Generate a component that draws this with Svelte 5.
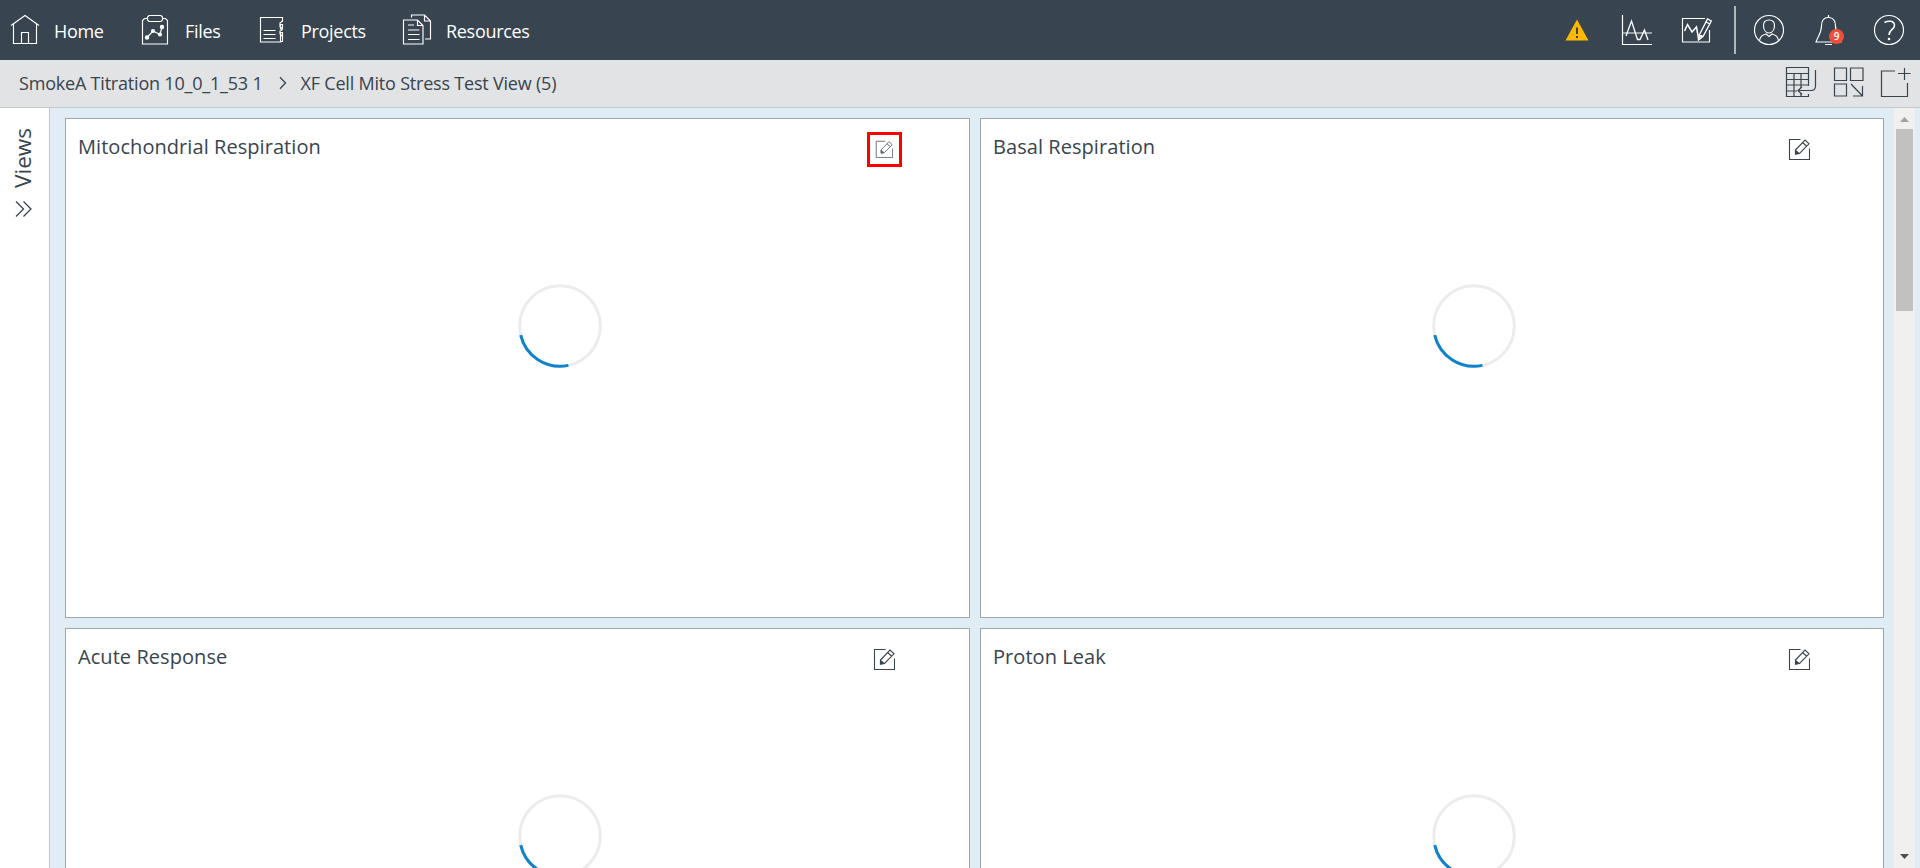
<script>
  const nav = [
    { id: 'home', label: 'Home' },
    { id: 'files', label: 'Files' },
    { id: 'projects', label: 'Projects' },
    { id: 'resources', label: 'Resources' }
  ];
  const cards = [
    { title: 'Mitochondrial Respiration', marked: true },
    { title: 'Basal Respiration' },
    { title: 'Acute Response' },
    { title: 'Proton Leak' }
  ];
</script>

{#snippet navIcon(id)}
  <svg class="ico" width="32" height="32" viewBox="0 0 32 32">
    {#if id === 'home'}
      <path d="M1 11.5 15 1.5 29 11.5M3.5 10V29.5H26.500V10M11.500 29.500V18.500H18.500V29.500" />
    {:else if id === 'files'}
      <path d="M6.500 4.500H3.500L1.500 6.500V30H26.500V6.500L24.500 4.500H21.500M8 1.500H20L21.500 3V6L20 7.500H8L6.500 6V3ZM6 23.500 12 17 19 20.500 21 13" />
      <g fill="#fff" stroke="none"><circle cx="6" cy="23.500" r="2.200" /><circle cx="12" cy="17" r="2.100" /><circle cx="19" cy="20.500" r="2.100" /><circle cx="21" cy="13" r="2.200" /></g>
    {:else if id === 'projects'}
      <path d="M26.500 8V3.500H4.500V28H24.500V22M7.500 16.500H19.500M7.500 20.500H19.500M7.500 24.500H19.500M26.500 3.500V7L24 9V13L26 14V16L24 17V20L26.500 22V27.500H24M24.500 10.500H26.500V15H24.500ZM24.500 18.500H26.500V22H24.500Z" />
    {:else}
      <path d="M9.500 3V.500H22.500L28.500 6.500V24.500H23M22.500 .500V6.500H28.500M1.500 5.500H15.500L21 11V29.500H1.500ZM15.500 5.500V11H21M6 10.500H12M6 15.500H17.500M6 20H17.500M6 25H17.500" transform="translate(0 .5)" />
    {/if}
  </svg>
{/snippet}

{#snippet editIcon(size)}
  <svg class="edit" width={size} height={size} viewBox="0 0 22 22">
    <path d="M12.500 1.500H1.500V21.500H21.500V10.500" />
    <path d="M7.500 12 17 2 21 5.800 11.500 15.500 7.500 16ZM14.500 4.500 18.500 8" />
    <path d="M7.500 12.500 11 15.500 7.500 16Z" fill="#38444f" />
  </svg>
{/snippet}

<div class="app">
  <header>
    <nav>
      {#each nav as item}
        <a class={item.id} href="#{item.id}">
          {@render navIcon(item.id)}
          <span>{item.label}</span>
        </a>
      {/each}
    </nav>
    <div class="tools">
      <svg class="warn" width="24" height="22" viewBox="0 0 24 22">
        <path d="M12 .500 23.500 21.500H.500Z" fill="#ffb800" />
        <path d="M12 8.500V15M12 17V19" stroke="#38444f" stroke-width="2" />
      </svg>
      <svg class="ico curve" width="32" height="32" viewBox="0 0 32 32">
        <path d="M1.500 1V30.500H31" stroke-width="1.200" />
        <path d="M2 19H31" stroke="#aeb5bb" stroke-width="1.600" />
        <path d="M5 22 10.500 7 16.500 25.500H19L23.500 16 27 26" stroke-width="1.300" />
      </svg>
      <svg class="ico draw" width="32" height="32" viewBox="0 0 32 32">
        <g transform="translate(0 2)">
          <path d="M24 2.500H1.500V26H28.500V14" />
          <path d="M3.500 15 6.500 8.500 11 16 15.500 11 17.500 22.500 21 19.500" stroke-width="1.500" />
          <path d="M18 19.500 26.500 3 30.300 5 22 20.500 17.500 24ZM25 6 29 8M18 19.500 22 20.500" stroke-width="1.300" />
        </g>
      </svg>
      <i class="divider"></i>
      <svg class="ico user" width="32" height="32" viewBox="0 0 32 32">
        <circle cx="16" cy="16" r="14.500" />
        <path d="M16 6C12 6 10.300 8.500 10.500 12 10.700 16 13 19 16 19S21.300 16 21.500 12C21.700 8.500 20 6 16 6ZM6.500 26.500C7.500 22 9 21.500 13 20L16 22.500 19 20C23 21.500 24.500 22 25.500 26.500" />
      </svg>
      <div class="bell">
        <svg class="ico" width="28" height="32" viewBox="0 0 28 32">
          <path d="M12.500 3.500C8 4 6.500 7 6.500 12 6.500 19 3 22 1 28H26C24 22 20.500 19 20.500 12 20.500 7 18 4 14.500 3.500ZM13.500 1V4M10 30.500H17" />
        </svg>
        <b>9</b>
      </div>
      <svg class="ico help" width="32" height="32" viewBox="0 0 32 32">
        <circle cx="16" cy="16" r="14.500" />
        <path d="M11.500 8.500C15 6.300 21.500 6.500 21.500 11.500 21.500 15.500 16 15.500 16 21" stroke-width="1.500" />
        <circle cx="16" cy="25" r="1.300" fill="#fff" stroke="none" />
      </svg>
    </div>
  </header>

  <div class="crumbs">
    <span>SmokeA Titration 10_0_1_53 1</span>
    <svg class="sep" width="8" height="14" viewBox="0 0 8 14"><path d="M1 1.200 6.500 7 1 12.800" /></svg>
    <span>XF Cell Mito Stress Test View (5)</span>
    <div class="actions">
      <svg width="32" height="32" viewBox="0 0 32 32">
        <path d="M23.500 20V1.500H1.500V30.500H23.500V28M1.500 7.500H23.500M1.500 13.500H23.500M1.500 19H23.500M1.500 25H12M9 7.500V30.500M16 7.500V22M16 27V30.500" />
        <path d="M30.500 4V20C30.500 23 29 24.500 26 24.500H13M17 21 13 24.500 17 28.500" />
      </svg>
      <svg width="32" height="32" viewBox="0 0 32 32">
        <path d="M1.500 2H13.500V14.500H1.500ZM17.500 2H30V14.500H17.500ZM1.500 18H13.500V30H1.500ZM18 18 29.500 30M29.500 20V30H20" />
      </svg>
      <svg class="add" width="32" height="32" viewBox="0 0 32 32">
        <path d="M15 5H1.500V30.500H27.500V17M24.500 2V14M18 7.500H30.500" />
      </svg>
    </div>
  </div>

  <div class="body">
    <aside>
      <span>Views</span>
      <svg width="18" height="18" viewBox="0 0 18 18"><path d="M1 1.500 8.500 9 1 16.500M8.500 1.500 16 9 8.500 16.500" /></svg>
    </aside>
    <main>
      {#each cards as card}
        <section>
          <h2>{card.title}</h2>
          <button class:marked={card.marked} aria-label="Edit">
            {@render editIcon(card.marked ? 18 : 22)}
          </button>
          <svg class="spinner" width="84" height="84" viewBox="0 0 84 84">
            <circle cx="42" cy="42" r="40.300" stroke="#ebecee" />
            <path d="M50.400 81.400A40.300 40.300 0 0 1 2.700 51.100" stroke="#0e82cb" />
          </svg>
        </section>
      {/each}
    </main>
    <div class="scroll">
      <svg width="9" height="5" viewBox="0 0 9 5"><path d="M0 5 4.500 0 9 5Z" fill="#a0a0a0" /></svg>
      <i></i>
      <svg class="down" width="9" height="5" viewBox="0 0 9 5"><path d="M0 0H9L4.500 5Z" fill="#4f4f4f" /></svg>
    </div>
  </div>
</div>

<style>
  :global(body) { margin: 0; overflow: hidden; }
  .app { width: 1920px; height: 868px; display: flex; flex-direction: column; overflow: hidden; background: #e0edf5; color: #38444f; font-family: "Open Sans", "Noto Sans", sans-serif; }
  svg { display: block; flex: none; fill: none; }
  header { height: 60px; flex: none; display: flex; justify-content: space-between; background: #38444f; color: #fff; }
  .ico { stroke: #fff; stroke-width: 1.15; }
  nav { display: flex; padding-left: 10px; }
  nav a { display: flex; align-items: center; color: #fff; text-decoration: none; font-size: 18px; font-weight: 500; letter-spacing: -0.3px; white-space: nowrap; }
  nav a svg { margin-right: 12px; }
  nav a span { padding-top: 1px; }
  .home { width: 131px; }
  .files { width: 115px; }
  .projects { width: 146px; }
  .projects svg { margin-right: 13px; }
  .tools { display: flex; align-items: center; }
  .curve { margin-left: 32px; }
  .draw { margin-left: 28px; }
  .warn { margin-top: -1px; }
  .divider { width: 2px; height: 48px; margin: 0 17px 0 21px; background: #b0b6ba; }
  .bell { position: relative; margin-left: 30px; }
  .bell b { position: absolute; left: 14px; top: 15px; width: 15px; height: 15px; border-radius: 50%; background: #f04e37; font-size: 10px; line-height: 15px; text-align: center; font-weight: 600; }
  .help { margin: 0 15px 0 30px; }
  .crumbs { height: 47px; flex: none; display: flex; align-items: center; padding: 0 8px 0 19px; background: #e1e3e4; border-bottom: 1px solid #c4c9cc; font-size: 18px; letter-spacing: -0.2px; white-space: nowrap; }
  .crumbs > span { padding-bottom: 1px; }
  .sep { margin: 0 14px 2px 16px; }
  .sep path, aside path { stroke: #38444f; stroke-width: 1.3; }
  .actions { display: flex; gap: 16px; margin: 0 0 3px auto; }
  .add { margin-left: -1px; }
  .actions path { stroke: #38444f; stroke-width: 1.2; }
  .body { flex: 1; min-height: 0; display: flex; }
  aside { width: 49px; flex: none; background: #fff; border-right: 1px solid #bfc5c9; display: flex; flex-direction: column; align-items: center; padding-top: 20px; box-sizing: content-box; }
  aside span { writing-mode: vertical-rl; transform: rotate(180deg); font-size: 22.5px; line-height: 30px; margin-right: 4px; }
  aside svg { margin-top: 12px; margin-right: 1px; }
  main { display: grid; grid-template-columns: 905px 904px; grid-template-rows: 500px 500px; gap: 10px; padding: 10px 10px 0 15px; height: 750px; overflow: hidden; }
  section { box-sizing: border-box; background: #fff; border: 1px solid #9da7ae; display: grid; grid-template-columns: 801px 35px; grid-template-rows: 61px auto; align-items: start; }
  h2 { margin: 15px 0 0 12px; font-size: 20px; line-height: 26px; letter-spacing: 0.06px; font-weight: 400; white-space: nowrap; }
  button { box-sizing: border-box; width: 35px; height: 35px; margin-top: 13px; padding: 0 1px 1px 0; border: 0; background: none; display: flex; align-items: center; justify-content: center; }
  .marked { border: 3px solid red; }
  .marked .edit { opacity: 0.8; }
  .edit { stroke: #38444f; stroke-width: 1.1; }
  .spinner { grid-column: 1; margin: 104px 0 0 452px; stroke-width: 3; }
  section:nth-child(even) .spinner { margin-left: 451px; }
  .scroll { width: 21px; flex: none; background: #f0f0f0; display: flex; flex-direction: column; align-items: center; padding-top: 9px; box-sizing: border-box; }
  .scroll i { width: 17px; height: 182px; margin-top: 7px; background: #c1c1c1; }
  .down { margin: auto 0 9px; }
</style>
